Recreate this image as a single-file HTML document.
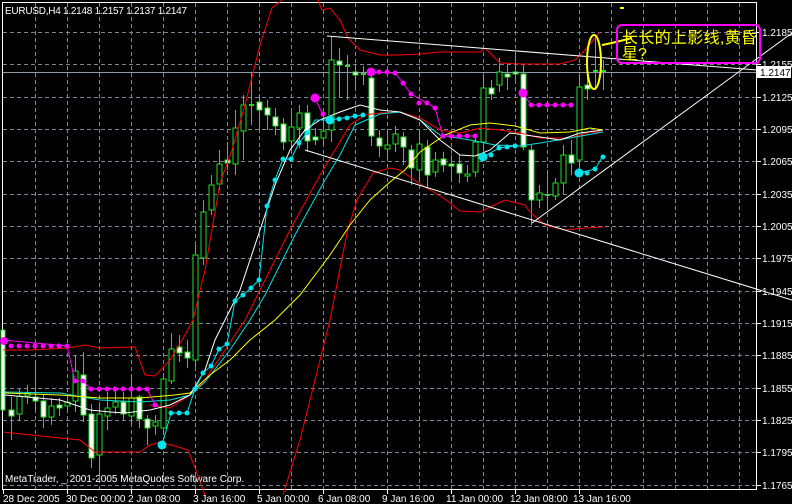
<!DOCTYPE html>
<html><head><meta charset="utf-8"><style>
html,body{margin:0;padding:0;background:#000;}
svg{display:block;}
text{font-family:"Liberation Sans","Noto Sans CJK SC",sans-serif;}
</style></head><body>
<svg width="792" height="504" viewBox="0 0 792 504" xmlns="http://www.w3.org/2000/svg">
<rect width="792" height="504" fill="#000"/>
<g stroke="#7a8696" stroke-width="1" stroke-dasharray="4,3">
<path d="M35.5 3V489M67.5 3V489M99.5 3V489M131.5 3V489M163.5 3V489M195.5 3V489M227.5 3V489M259.5 3V489M291.5 3V489M323.5 3V489M355.5 3V489M387.5 3V489M419.5 3V489M451.5 3V489M483.5 3V489M515.5 3V489M547.5 3V489M579.5 3V489M611.5 3V489M643.5 3V489M675.5 3V489M707.5 3V489M739.5 3V489"/>
<path d="M3 32.5H756M3 64.5H756M3 97.5H756M3 129.5H756M3 161.5H756M3 194.5H756M3 226.5H756M3 258.5H756M3 291.5H756M3 323.5H756M3 355.5H756M3 388.5H756M3 420.5H756M3 452.5H756M3 485.5H756"/>
</g>
<rect x="2.5" y="2.5" width="754" height="487" fill="none" stroke="#fff"/>
<line x1="3" y1="72.5" x2="756" y2="72.5" stroke="#8a9aaa"/>
<g stroke="#fff">
<path d="M757 32.5h4M757 64.5h4M757 97.5h4M757 129.5h4M757 161.5h4M757 194.5h4M757 226.5h4M757 258.5h4M757 291.5h4M757 323.5h4M757 355.5h4M757 388.5h4M757 420.5h4M757 452.5h4M757 485.5h4"/>
<path d="M3.5 490v4M67.5 490v4M131.5 490v4M195.5 490v4M259.5 490v4M323.5 490v4M387.5 490v4M451.5 490v4M515.5 490v4M579.5 490v4"/>
</g>
<g fill="#fff" font-size="10">
<text x="762" y="36">1.2185</text><text x="762" y="68">1.2155</text><text x="762" y="101">1.2125</text><text x="762" y="133">1.2095</text><text x="762" y="165">1.2065</text><text x="762" y="198">1.2035</text><text x="762" y="230">1.2005</text><text x="762" y="262">1.1975</text><text x="762" y="295">1.1945</text><text x="762" y="327">1.1915</text><text x="762" y="359">1.1885</text><text x="762" y="392">1.1855</text><text x="762" y="424">1.1825</text><text x="762" y="456">1.1795</text><text x="762" y="489">1.1765</text>
<text x="3" y="502">28 Dec 2005</text><text x="66" y="502">30 Dec 00:00</text><text x="128" y="502">2 Jan 08:00</text><text x="193" y="502">3 Jan 16:00</text><text x="257" y="502">5 Jan 00:00</text><text x="318" y="502">6 Jan 08:00</text><text x="382" y="502">9 Jan 16:00</text><text x="446" y="502">11 Jan 00:00</text><text x="510" y="502">12 Jan 08:00</text><text x="573" y="502">13 Jan 16:00</text>
<text x="5" y="14" textLength="182">EURUSD,H4  1.2148 1.2157 1.2137 1.2147</text>
<text x="5" y="482">MetaTrader, _ 2001-2005 MetaQuotes Software Corp.</text>
</g>
<rect x="757" y="66" width="34" height="12" fill="#fff"/>
<text x="760" y="76" font-size="10" fill="#000">1.2147</text>

<g stroke="#22dd22" stroke-width="1">
<path d="M11.5 397V440M19.5 388V421M27.5 385V404M35.5 361V410M43.5 395V428M51.5 398V425M59.5 398V416M67.5 395V413M75.5 355V412M83.5 352V422M91.5 404V468M99.5 404V478M107.5 392V430M115.5 390V414M123.5 392V420M131.5 375V425M139.5 395V428M147.5 415V445M155.5 415V435M163.5 373V435M171.5 333V384M179.5 335V362M187.5 340V368M195.5 245V367M203.5 200V265M211.5 175V215M219.5 150V190M227.5 142V170M235.5 110V175M243.5 95V160M251.5 72V125M259.5 95V133M267.5 100V130M275.5 108V135M283.5 118V150M291.5 112V150M299.5 105V148M307.5 105V152M315.5 128V145M323.5 120V145M331.5 37V142M339.5 48V98M347.5 55V100M355.5 64V90M363.5 66V85M371.5 70V146M379.5 130V157M387.5 130V160M395.5 126V152M403.5 132V165M411.5 145V185M419.5 130V182M427.5 140V188M435.5 152V177M443.5 152V172M451.5 155V180M459.5 155V183M467.5 165V182M475.5 135V177M483.5 75V150M491.5 80V100M499.5 58V92M507.5 65V90M515.5 52V80M523.5 65V150M531.5 145V225M539.5 185V208M547.5 170V210M555.5 178V200M563.5 145V195M571.5 140V175M579.5 75V170M587.5 75V100M595.5 38V90M603.5 60V90"/>
</g>
<g stroke="#22dd22" stroke-width="1">
<g fill="#000">
<rect x="17" y="396" width="5" height="18"/><rect x="25" y="393" width="5" height="3"/><rect x="49" y="406" width="5" height="11"/><rect x="65" y="402" width="5" height="4"/><rect x="73" y="371" width="5" height="30"/><rect x="97" y="414" width="5" height="41"/><rect x="105" y="408" width="5" height="8"/><rect x="113" y="402" width="5" height="5"/><rect x="129" y="398" width="5" height="18"/><rect x="153" y="422" width="5" height="4"/><rect x="161" y="379" width="5" height="49"/><rect x="169" y="349" width="5" height="32"/><rect x="193" y="255" width="5" height="105"/><rect x="201" y="212" width="5" height="46"/><rect x="209" y="185" width="5" height="25"/><rect x="217" y="164" width="5" height="20"/><rect x="233" y="128" width="5" height="36"/><rect x="241" y="105" width="5" height="26"/><rect x="289" y="127" width="5" height="14"/><rect x="297" y="113" width="5" height="15"/><rect x="321" y="131" width="5" height="7"/><rect x="329" y="60" width="5" height="70"/><rect x="385" y="145" width="5" height="4"/><rect x="393" y="134" width="5" height="10"/><rect x="417" y="144" width="5" height="26"/><rect x="433" y="160" width="5" height="12"/><rect x="465" y="174" width="5" height="2"/><rect x="473" y="142" width="5" height="30"/><rect x="481" y="88" width="5" height="54"/><rect x="497" y="72" width="5" height="13"/><rect x="537" y="193" width="5" height="7"/><rect x="553" y="183" width="5" height="13"/><rect x="561" y="155" width="5" height="28"/><rect x="577" y="87" width="5" height="73"/>
</g>
<g fill="#fff">
<rect x="9" y="410" width="5" height="6"/><rect x="33" y="397" width="5" height="4"/><rect x="41" y="401" width="5" height="16"/><rect x="57" y="405" width="5" height="3"/><rect x="81" y="375" width="5" height="40"/><rect x="89" y="414" width="5" height="44"/><rect x="121" y="402" width="5" height="12"/><rect x="137" y="397" width="5" height="22"/><rect x="145" y="419" width="5" height="9"/><rect x="177" y="347" width="5" height="6"/><rect x="185" y="352" width="5" height="6"/><rect x="225" y="160" width="5" height="3"/><rect x="257" y="102" width="5" height="8"/><rect x="265" y="108" width="5" height="7"/><rect x="273" y="117" width="5" height="9"/><rect x="281" y="124" width="5" height="18"/><rect x="305" y="113" width="5" height="28"/><rect x="313" y="137" width="5" height="3"/><rect x="337" y="61" width="5" height="4"/><rect x="353" y="72" width="5" height="3"/><rect x="369" y="78" width="5" height="58"/><rect x="377" y="138" width="5" height="8"/><rect x="401" y="137" width="5" height="10"/><rect x="409" y="150" width="5" height="18"/><rect x="425" y="147" width="5" height="28"/><rect x="441" y="159" width="5" height="6"/><rect x="449" y="164" width="5" height="2"/><rect x="457" y="164" width="5" height="9"/><rect x="489" y="88" width="5" height="6"/><rect x="505" y="74" width="5" height="3"/><rect x="513" y="72" width="5" height="2"/><rect x="521" y="74" width="5" height="73"/><rect x="529" y="150" width="5" height="50"/><rect x="569" y="155" width="5" height="8"/><rect x="585" y="85" width="5" height="4"/>
<rect x="1" y="330" width="4" height="80"/>
</g>
<path d="M249 105h5M345 66h5M361 74h5M545 195h5M593 71h5M601 71h5" stroke-width="2"/>
</g>

<g fill="none" stroke-width="1">
<polyline stroke="#ff0000" points="3,350 30,350 68,348 85,345 100,348 135,347 145,375 155,376 170,360 185,335 193,320 205,270 220,183 232,150 245,105 260,45 272,8 282,0"/>
<polyline stroke="#ff0000" points="318,0 322,10 330,8 340,20 348,38 360,50 380,55 400,55 420,54 440,52 480,52 485,48 492,55 500,63 520,64 560,64 575,60 585,50 600,32"/>
<polyline stroke="#ff0000" points="3,432 50,437 80,440 95,452 110,452 140,452 150,445 160,442 175,446 188,450 195,468 205,495"/>
<polyline stroke="#ff0000" points="283,495 300,440 315,380 330,320 347,233 357,200 373,173 390,168 400,170 420,184 445,199 460,211 480,212 505,200 525,205 530,212 545,225 565,230 585,228 603,227"/>
<polyline stroke="#ff0000" points="150,405 170,408 190,395 205,380 225,350 245,320 260,290 290,230 320,175 335,150 350,125 365,115 380,113 400,112 420,118 440,130 460,133 480,128 500,130 520,133 540,138 570,138 590,132 603,132"/>
<polyline stroke="#00e0e0" points="5,392 60,393 100,400 140,402 170,400 190,395 205,382 230,350 250,320 265,295 295,235 325,180 340,155 355,125 380,114 400,112 420,120 440,135 470,140 495,145 520,146 540,143 570,138 603,132"/>
<polyline stroke="#ffff00" points="5,393 60,395 100,398 140,398 175,395 190,393 210,375 230,360 250,340 275,320 300,295 330,255 350,225 370,200 390,182 405,170 420,152 445,135 470,125 490,123 515,126 540,133 570,132 590,128 603,130"/>
<polyline stroke="#ffffff" points="5,395 60,400 90,410 110,412 125,413 150,410 170,405 190,395 205,370 215,340 225,320 240,290 260,230 275,185 290,150 305,130 320,120 340,112 360,105 380,110 400,112 420,120 440,140 460,155 475,156 490,150 510,133 540,137 560,140 580,133 603,130"/>
</g>
<g stroke="#fff" stroke-width="1" fill="none">
<line x1="327" y1="36" x2="757" y2="70"/>
<line x1="305" y1="150" x2="792" y2="300"/>
<line x1="532" y1="223" x2="792" y2="33"/>
</g>

<g fill="#ff00ff">
<polyline fill="none" stroke="#ff00ff" points="3,340 67,346 75,381 83,381 91,389 147,389 155,405"/>
<circle cx="4" cy="341" r="4"/>
<circle cx="11" cy="346" r="2.5"/><circle cx="19" cy="346" r="2.5"/><circle cx="27" cy="346" r="2.5"/><circle cx="35" cy="346" r="2.5"/><circle cx="43" cy="346" r="2.5"/><circle cx="51" cy="346" r="2.5"/><circle cx="59" cy="346" r="2.5"/><circle cx="67" cy="346" r="2.5"/>
<circle cx="75" cy="381" r="2.5"/><circle cx="83" cy="381" r="2.5"/>
<circle cx="91" cy="389" r="2.5"/><circle cx="99" cy="389" r="2.5"/><circle cx="107" cy="389" r="2.5"/><circle cx="115" cy="389" r="2.5"/><circle cx="123" cy="389" r="2.5"/><circle cx="131" cy="389" r="2.5"/><circle cx="139" cy="389" r="2.5"/><circle cx="147" cy="389" r="2.5"/><circle cx="155" cy="405" r="2.5"/>
<polyline fill="none" stroke="#ff00ff" points="315,98 323,115"/>
<circle cx="315" cy="98" r="4.5"/><circle cx="323" cy="114" r="2.5"/>
<polyline fill="none" stroke="#ff00ff" points="371,72 395,73 403,83 411,94 427,103 435,108 443,136 475,136"/>
<circle cx="371" cy="72" r="4.5"/><circle cx="379" cy="72" r="2.5"/><circle cx="387" cy="72" r="2.5"/><circle cx="395" cy="73" r="2.5"/><circle cx="403" cy="83" r="2.5"/><circle cx="411" cy="94" r="2.5"/><circle cx="419" cy="103" r="2.5"/><circle cx="427" cy="103" r="2.5"/><circle cx="435" cy="108" r="2.5"/><circle cx="443" cy="136" r="2.5"/><circle cx="451" cy="136" r="2.5"/><circle cx="459" cy="136" r="2.5"/><circle cx="467" cy="136" r="2.5"/><circle cx="475" cy="136" r="2.5"/>
<polyline fill="none" stroke="#ff00ff" points="523,93 531,105 571,105"/>
<circle cx="523" cy="93" r="4.5"/><circle cx="531" cy="105" r="2.5"/><circle cx="539" cy="105" r="2.5"/><circle cx="547" cy="105" r="2.5"/><circle cx="555" cy="105" r="2.5"/><circle cx="563" cy="105" r="2.5"/><circle cx="571" cy="105" r="2.5"/>
</g>
<g fill="#00e5ee">
<polyline fill="none" stroke="#00e5ee" points="162,445 171,413 187,413 195,389 203,373 211,366 219,349 227,344 235,301 243,295 251,288 259,280 267,206 275,180 283,159 291,159 299,143 307,133 315,120 330,120 363,115"/>
<circle cx="162" cy="445" r="4.5"/><circle cx="171" cy="413" r="2.5"/><circle cx="179" cy="413" r="2.5"/><circle cx="187" cy="413" r="2.5"/><circle cx="195" cy="389" r="2.5"/><circle cx="203" cy="373" r="2.5"/><circle cx="211" cy="366" r="2.5"/><circle cx="219" cy="349" r="2.5"/><circle cx="227" cy="344" r="2.5"/><circle cx="235" cy="301" r="2.5"/><circle cx="243" cy="295" r="2.5"/><circle cx="251" cy="288" r="2.5"/><circle cx="259" cy="280" r="2.5"/><circle cx="267" cy="206" r="2.5"/><circle cx="275" cy="180" r="2.5"/><circle cx="283" cy="159" r="2.5"/><circle cx="291" cy="159" r="2.5"/><circle cx="299" cy="143" r="2.5"/><circle cx="307" cy="133" r="2.5"/>
<circle cx="330" cy="120" r="4.5"/><circle cx="339" cy="119" r="2.5"/><circle cx="347" cy="118" r="2.5"/><circle cx="355" cy="116" r="2.5"/><circle cx="363" cy="115" r="2.5"/>
<polyline fill="none" stroke="#00e5ee" points="483,157 499,148 515,146"/>
<circle cx="483" cy="157" r="4.5"/><circle cx="491" cy="155" r="2.5"/><circle cx="499" cy="148" r="2.5"/><circle cx="507" cy="147" r="2.5"/><circle cx="515" cy="146" r="2.5"/>
<polyline fill="none" stroke="#00e5ee" points="579,173 595,169 603,156"/>
<circle cx="579" cy="173" r="4.5"/><circle cx="587" cy="173" r="2.5"/><circle cx="595" cy="169" r="2.5"/><circle cx="603" cy="157" r="2.5"/>
</g>

<ellipse cx="594" cy="62" rx="7" ry="27" fill="none" stroke="#ffff00" stroke-width="2"/>
<polyline points="602,45 612,43 632,38" fill="none" stroke="#ffff00" stroke-width="2"/>
<rect x="620" y="7" width="4" height="2" fill="#ffff00"/>
<rect x="617" y="25" width="143" height="38" rx="5" fill="none" stroke="#ff00ff" stroke-width="2"/>
<g fill="#ffff00" font-size="16">
<text x="622" y="43" textLength="135">长长的上影线,黄昏</text>
<text x="622" y="59">星?</text>
</g>
</svg>
</body></html>
